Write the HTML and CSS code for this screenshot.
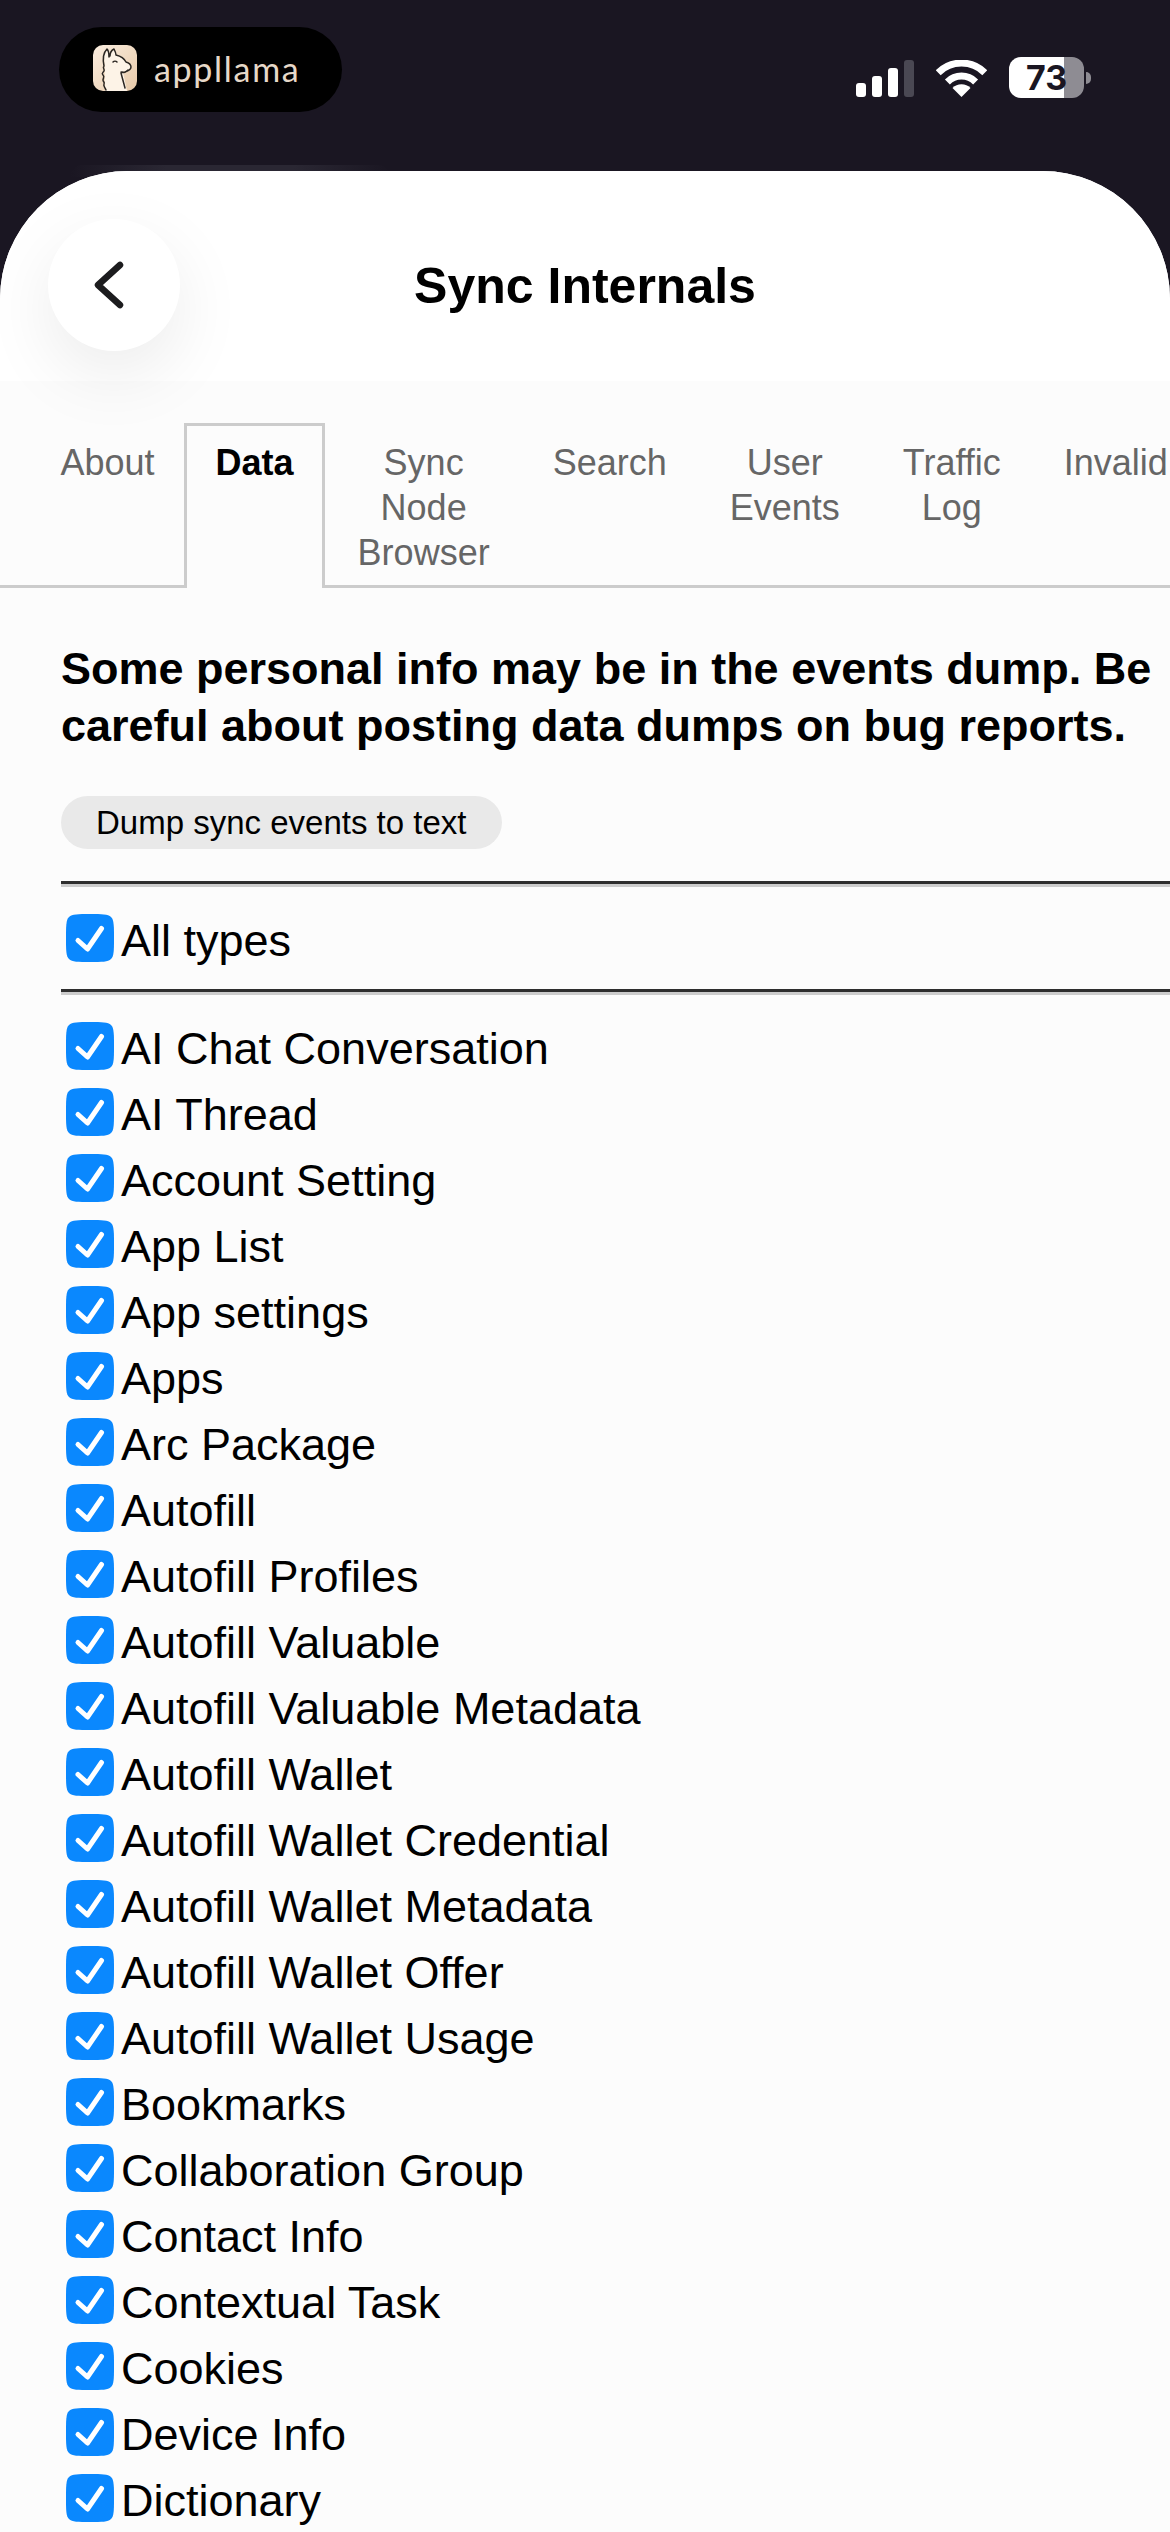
FILE: index.html
```html
<!DOCTYPE html>
<html lang="en">
<head>
<meta charset="utf-8">
<title>Sync Internals</title>
<link rel="stylesheet" href="styles.css">
</head>
<body>
<svg class="defs" width="0" height="0">
  <symbol id="tick" viewBox="0 0 48 48">
    <path fill="#0a88fe" d="M24 0c12 0 18 0 21 3s3 9 3 21 0 18-3 21-9 3-21 3-18 0-21-3-3-9-3-21 0-18 3-21 9-3 21-3z"/>
    <path fill="none" stroke="#fff" stroke-width="5" stroke-linecap="round" stroke-linejoin="round" d="M12 26.500 21.500 35 35.500 14.500"/>
  </symbol>
</svg>

<!-- status bar -->
<div class="status">
  <div class="brand">
    <svg class="brand-icon" viewBox="0 0 44 46">
      <defs>
        <linearGradient id="skin" x1="0" y1="0" x2="1" y2="1">
          <stop offset="0" stop-color="#fbeee0"/>
          <stop offset="1" stop-color="#e7c9a8"/>
        </linearGradient>
      </defs>
      <rect width="44" height="46" rx="10" fill="url(#skin)"/>
      <path fill="#fdf3e7" d="M12 46V20l-1-9 3-7 3 6 3-6 4 6c4 1 7 3 9 6l5 5c1 3-2 5-6 5l-2 1 4 19z"/>
      <path fill="none" stroke="#2b2622" stroke-width="1.500" stroke-linecap="round" stroke-linejoin="round" d="M11 21c-1-5-1-13 3-17 2 2 2 5 2 8M17 11c0-3 2-6 4-7 1 2 2 4 2 6 4 1 8 3 10 7 3 1 5 3 5 5 0 3-3 4-6 5-1 0-3 0-4 1l4 15M11 21c-2 2 1 3 0 5s-3 2-1 4 0 3 0 5 2 2 1 4 1 3 2 6M20 17c1-1 3-1 4 0M28 27c2 1 5 0 7-2"/>
    </svg>
    <span class="brand-name">appllama</span>
  </div>
  <div class="indicators">
    <div class="signal">
      <i class="bar bar1"></i><i class="bar bar2"></i><i class="bar bar3"></i><i class="bar bar4"></i>
    </div>
    <svg class="wifi" viewBox="0 0 51 37">
      <path fill="none" stroke="#fff" stroke-width="7" d="M2.200 12.700A33 33 0 0 1 48.800 12.700M11.400 21.900A20 20 0 0 1 39.600 21.900"/>
      <path fill="#fff" d="M25.500 37 16.500 28A12.700 12.700 0 0 1 34.500 28Z"/>
    </svg>
    <div class="battery"><span>73</span></div>
    <i class="battery-nub"></i>
  </div>
</div>

<div class="sheet-edge"></div>
<div class="sheet">
  <div class="header">
    <button class="back">
      <svg width="30" height="48" viewBox="0 0 30 48">
        <path fill="none" stroke="#1c1c1e" stroke-width="6.500" stroke-linecap="round" stroke-linejoin="round" d="M26 4 4 24 26 44"/>
      </svg>
    </button>
    <h1 class="title">Sync Internals</h1>
  </div>

  <ul class="tabs">
    <li class="tab">About</li>
    <li class="tab tab-on">Data</li>
    <li class="tab">Sync<br>Node<br>Browser</li>
    <li class="tab">Search</li>
    <li class="tab">User<br>Events</li>
    <li class="tab">Traffic<br>Log</li>
    <li class="tab">Invalid</li>
  </ul>

  <div class="content">
    <h2 class="warning">Some personal info may be in the events dump. Be careful about posting data dumps on bug reports.</h2>
    <button class="dump">Dump sync events to text</button>
    <hr class="rule">
    <div class="row row-all"><svg class="box"><use href="#tick"/></svg>All types</div>
    <hr class="rule">
    <div class="types">
      <div class="row"><svg class="box"><use href="#tick"/></svg>AI Chat Conversation</div>
      <div class="row"><svg class="box"><use href="#tick"/></svg>AI Thread</div>
      <div class="row"><svg class="box"><use href="#tick"/></svg>Account Setting</div>
      <div class="row"><svg class="box"><use href="#tick"/></svg>App List</div>
      <div class="row"><svg class="box"><use href="#tick"/></svg>App settings</div>
      <div class="row"><svg class="box"><use href="#tick"/></svg>Apps</div>
      <div class="row"><svg class="box"><use href="#tick"/></svg>Arc Package</div>
      <div class="row"><svg class="box"><use href="#tick"/></svg>Autofill</div>
      <div class="row"><svg class="box"><use href="#tick"/></svg>Autofill Profiles</div>
      <div class="row"><svg class="box"><use href="#tick"/></svg>Autofill Valuable</div>
      <div class="row"><svg class="box"><use href="#tick"/></svg>Autofill Valuable Metadata</div>
      <div class="row"><svg class="box"><use href="#tick"/></svg>Autofill Wallet</div>
      <div class="row"><svg class="box"><use href="#tick"/></svg>Autofill Wallet Credential</div>
      <div class="row"><svg class="box"><use href="#tick"/></svg>Autofill Wallet Metadata</div>
      <div class="row"><svg class="box"><use href="#tick"/></svg>Autofill Wallet Offer</div>
      <div class="row"><svg class="box"><use href="#tick"/></svg>Autofill Wallet Usage</div>
      <div class="row"><svg class="box"><use href="#tick"/></svg>Bookmarks</div>
      <div class="row"><svg class="box"><use href="#tick"/></svg>Collaboration Group</div>
      <div class="row"><svg class="box"><use href="#tick"/></svg>Contact Info</div>
      <div class="row"><svg class="box"><use href="#tick"/></svg>Contextual Task</div>
      <div class="row"><svg class="box"><use href="#tick"/></svg>Cookies</div>
      <div class="row"><svg class="box"><use href="#tick"/></svg>Device Info</div>
      <div class="row"><svg class="box"><use href="#tick"/></svg>Dictionary</div>
    </div>
  </div>
</div>
</body>
</html>
```

FILE: styles.css
```css
/* reset */
html,body,h1,h2,ul,li,hr{margin:0; padding:0;}
li{list-style:none;}
html,body{height:2532px; overflow:hidden;}
body{position:relative; background:#1a1622; font-family:"Liberation Sans",Arial,sans-serif; color:#000;}
.defs{display:block;}

/* status bar */
.status{height:171px; display:flex; justify-content:space-between; align-items:flex-start; padding:0 79px 0 59px; box-sizing:border-box;}
.brand{margin-top:27px; width:283px; height:85px; border-radius:43px; background:#000; display:flex; align-items:center; padding-left:34px; box-sizing:border-box;}
.brand-icon{width:44px; height:46px; margin-top:-3px;}
.brand-name{margin-left:17px; font-family:Lato,sans-serif; font-weight:400; font-size:34px; letter-spacing:1.700px; line-height:46px; color:#e6d8c8; margin-top:-2px;}
.indicators{margin-top:57px; display:flex; align-items:center;}
.signal{display:flex; align-items:flex-end; gap:6px; height:37px; margin-top:2px;}
.bar{display:block; width:10px; border-radius:3px; background:#fff;}
.bar1{height:14px;}
.bar2{height:21px;}
.bar3{height:29px;}
.bar4{height:37px; background:#4a4853;}
.wifi{width:51px; height:37px; margin-left:22px; margin-top:2px;}
.battery{width:75px; height:41px; margin-left:22px; border-radius:12px; background:linear-gradient(90deg,#fff 73%,#8e8c93 73%); text-align:center;}
.battery span{font-family:Inter,sans-serif; font-weight:700; font-size:34px; line-height:41px; color:#1a1622; display:block;}
.battery-nub{display:block; width:5px; height:12px; margin-left:2px; border-radius:0 6px 6px 0; background:#8e8c93;}

/* sheet */
.sheet-edge{position:absolute; top:165px; left:70px; width:320px; height:12px; border-radius:60px 60px 0 0; background:linear-gradient(90deg,rgba(42,39,51,0),#2a2733 30%,#2a2733 70%,rgba(42,39,51,0));}
.sheet{position:relative; height:2361px; background:#fcfcfc; border-radius:128px 128px 0 0; overflow:hidden;}
.header{height:210px; background:#fff; display:grid; grid-template-columns:132px 1fr 132px; align-items:center; padding:18px 48px 0; box-sizing:border-box;}
.back{position:relative; z-index:2; width:132px; height:132px; padding:0 10px 0 0; border:0; border-radius:50%; background:#fff; box-shadow:0 24px 70px rgba(0,0,0,.08); display:flex; align-items:center; justify-content:center;}
.title{font-size:50px; font-weight:700; line-height:60px; text-align:center; padding-top:2px;}

/* tabs */
.tabs{display:flex; height:162px; margin-top:42px; padding-left:28px; border-bottom:3px solid #ccc; white-space:nowrap;}
.tab{flex:none; box-sizing:border-box; height:162px; padding:14px 28.500px 0; border:3px solid transparent; border-bottom:0; font-size:36px; line-height:45px; color:#666; text-align:center;}
.tab:first-child{padding-left:29.500px; padding-right:26.500px;}
.tab-on{height:165px; margin-right:1px; border-color:#ccc; background:#fcfcfc; font-weight:700; color:#000;}

/* content */
.content{padding:52px 0 0 61px;}
.warning{font-size:45px; font-weight:700; line-height:57px; padding-right:10px;}
.dump{display:block; margin-top:42px; height:53px; padding:0 35px; border:0; border-radius:27px; background:#e9e9e9; font-family:inherit; font-size:33px; color:#000;}
.rule{margin-top:32px; height:0; border:0; border-top:3px solid #2e2e2e; border-bottom:3px solid #ccc;}
.row{display:flex; align-items:center; box-sizing:border-box; height:66px; padding-top:3px; font-size:45px; white-space:nowrap;}
.row-all{height:102px; padding-top:5px;}
.row-all + .rule{margin-top:0;}
.box{width:48px; height:48px; margin:-5px 7px 0 5px; flex:none;}
.types{padding-top:19px;}
```
